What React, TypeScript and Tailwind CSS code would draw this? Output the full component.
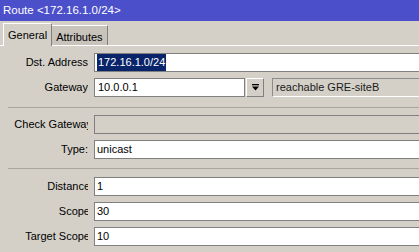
import React from 'react';

const Label: React.FC<{ text: string; clip?: string }> = ({ text, clip = '' }) => (
  <div className="w-[79px] ml-[9px] shrink-0 overflow-hidden whitespace-nowrap text-right">
    <span className={`inline-block ${clip}`}>{text}</span>
  </div>
);

const Field: React.FC<{ children?: React.ReactNode; disabled?: boolean }> = ({ children, disabled }) => (
  <div
    className={`ml-[6px] flex-1 h-[19px] border border-r-0 border-[#808080] flex items-center pl-[2px] ${
      disabled ? 'bg-[#d4d0c8]' : 'bg-white'
    }`}
  >
    {children}
  </div>
);

const Separator: React.FC<{ top: string; bottom: string }> = ({ top, bottom }) => (
  <div className={`ml-[8px] border-t border-[#aaa69e] ${top} ${bottom}`} />
);

export default function App() {
  return (
    <div className="w-[419px] h-[252px] overflow-hidden bg-[#d4d0c8] text-[11px] text-black font-['Liberation_Sans',Arial,sans-serif]">
      {/* title */}
      <div className="h-[21px] bg-[#4b4fca] text-white text-[11.5px] pl-[3px] flex items-center">
        Route &lt;172.16.1.0/24&gt;
      </div>

      {/* tabs */}
      <div className="h-[25px] flex items-end pl-[3px] border-b border-white">
        <div className="relative z-10 -mb-px h-[23px] px-[4px] bg-[#d4d0c8] border-l border-t border-white border-r border-r-[#808080] flex items-start pt-[3px]">
          General
        </div>
        <div className="h-[20px] px-[4px] bg-[#c8c4bc] border-t border-white border-r border-r-[#808080] flex items-start pt-[3px]">
          Attributes
        </div>
      </div>

      {/* panel */}
      <div className="pt-[7px] flex flex-col">
        <div className="flex items-center">
          <Label text="Dst. Address" />
          <Field>
            <span className="bg-[#0a246a] text-white px-px">172.16.1.0/24</span>
          </Field>
        </div>

        <div className="flex items-center mt-[6px]">
          <Label text="Gateway" />
          <div className="ml-[6px] w-[151px] h-[19px] border border-[#808080] bg-white flex items-center pl-[3px]">
            10.0.0.1
          </div>
          <div className="ml-px w-[18px] h-[19px] border border-white border-r-[#808080] border-b-[#808080] flex items-center justify-center">
            <svg width="7" height="7" viewBox="0 0 7 7">
              <rect x="0" y="0" width="7" height="1.3" fill="#000" />
              <polygon points="0,2.5 7,2.5 3.5,6.5" fill="#000" />
            </svg>
          </div>
          <div className="ml-[8px] flex-1 h-[19px] border border-r-0 border-[#8c8c8c] border-b-white flex items-center pl-[3px] text-[#1a1a1a]">
            reachable GRE-siteB
          </div>
        </div>

        <Separator top="mt-[10px]" bottom="mb-[7px]" />

        <div className="flex items-center">
          <Label text="Check Gateway" clip="-mr-[4px]" />
          <Field disabled />
        </div>

        <div className="flex items-center mt-[6px]">
          <Label text="Type:" />
          <Field>unicast</Field>
        </div>

        <Separator top="mt-[9px]" bottom="mb-[8px]" />

        <div className="flex items-center">
          <Label text="Distance" clip="-mr-[2px]" />
          <Field>1</Field>
        </div>

        <div className="flex items-center mt-[6px]">
          <Label text="Scope" clip="-mr-[2px]" />
          <Field>30</Field>
        </div>

        <div className="flex items-center mt-[6px]">
          <Label text="Target Scope" clip="-mr-[2px]" />
          <Field>10</Field>
        </div>
      </div>
    </div>
  );
}
